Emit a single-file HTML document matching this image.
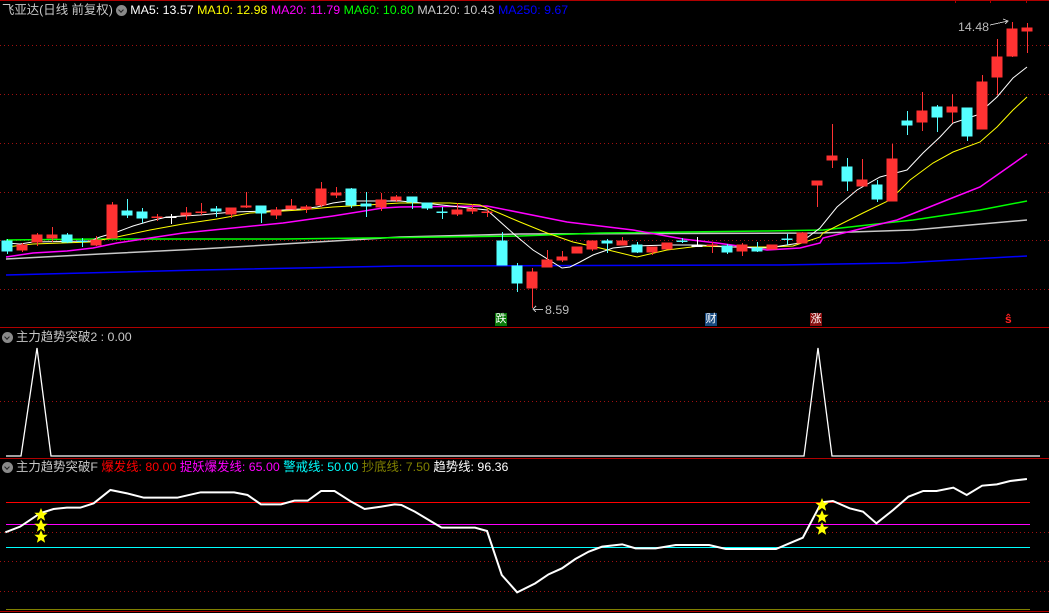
<!DOCTYPE html>
<html><head><meta charset="utf-8"><style>
html,body{margin:0;padding:0;background:#000;}
body{width:1049px;height:613px;overflow:hidden;position:relative;font-family:"Liberation Sans","Noto Sans CJK SC",sans-serif;}
.t{position:absolute;font-size:12.4px;white-space:nowrap;line-height:14px;}
.ic{display:inline-block;width:11px;height:11px;border-radius:50%;background:#8a8a8a;vertical-align:-2px;position:relative;margin-right:3px}
.ic:after{content:"";position:absolute;left:3px;top:3px;width:3px;height:3px;border-right:1.5px solid #222;border-bottom:1.5px solid #222;transform:rotate(45deg)}
</style></head><body>
<svg width="1049" height="613" style="position:absolute;left:0;top:0" shape-rendering="crispEdges">
<line x1="0" y1="0.5" x2="1049" y2="0.5" stroke="#b00000"/>
<line x1="0" y1="327.5" x2="1049" y2="327.5" stroke="#b00000"/>
<line x1="0" y1="458.5" x2="1049" y2="458.5" stroke="#b00000"/>
<line x1="0" y1="611.5" x2="1049" y2="611.5" stroke="#b00000"/>
<g stroke="#b00000"><line x1="955.5" y1="0" x2="955.5" y2="3"/><line x1="990.5" y1="0" x2="990.5" y2="3"/><line x1="1026.5" y1="0" x2="1026.5" y2="3"/></g>
<g stroke="#a01010" stroke-dasharray="1 3">
<line x1="0" y1="45.5" x2="1049" y2="45.5"/><line x1="0" y1="94.5" x2="1049" y2="94.5"/><line x1="0" y1="143.5" x2="1049" y2="143.5"/>
<line x1="0" y1="192.5" x2="1049" y2="192.5"/><line x1="0" y1="240.5" x2="1049" y2="240.5"/><line x1="0" y1="289.5" x2="1049" y2="289.5"/>
<line x1="0" y1="401.5" x2="1049" y2="401.5"/>
<line x1="0" y1="532.5" x2="1049" y2="532.5"/><line x1="0" y1="561.5" x2="1049" y2="561.5"/><line x1="0" y1="591.5" x2="1049" y2="591.5"/>
</g>
<g fill="none" stroke-width="1" shape-rendering="auto">
<polyline stroke="#0000ff" stroke-width="1.5" points="6,275 200,270 400,266 780,265 900,263 1027,256"/>
<polyline stroke="#c8c8c8" stroke-width="1.5" points="6,259 100,254 200,249 300,243 400,237 520,234 820,233 913,230 1027,220"/>
<polyline stroke="#00ff00" stroke-width="1.5" points="6,240 100,239 283,239 367,238 520,236 600,233 767,231 823,230 913,220 980,210 1027,201"/>
<polyline stroke="#ff00ff" stroke-width="1.5" points="6,257 33,253 67,251 93,248 117,243 150,238 183,233 233,228 283,223 333,216 383,208 400,207 487,206 567,222 633,230 683,239 717,243 767,250 800,248 820,243 823,238 897,220 947,200 980,187 1027,154"/>
<polyline stroke="#ffff00" points="6,247 33,244 90,242 117,237 150,230 183,224 217,219 250,213 300,210 333,207 367,205 400,203 450,203 480,205 520,222 547,233 573,242 600,248 637,257 667,250 700,246 733,247 767,247 793,246 820,237 823,233 863,213 890,200 910,180 933,163 953,152 980,142 997,127 1013,110 1027,97"/>
<polyline stroke="#ffffff" points="6,243 20,244 33,242 90,241 100,237 117,232 133,226 150,221 167,217 183,216 200,215 233,212 267,211 300,209 317,207 333,203 347,201 400,201 433,204 487,210 515,235 533,250 562,268 570,267 580,262 593,255 613,248 633,246 667,245 700,245 733,247 767,248 800,243 820,228 837,207 857,190 880,177 907,170 923,153 940,137 953,123 977,115 997,97 1013,78 1027,67"/>
</g>
<g fill="#ff3232" stroke="#ff3232">
<line x1="37.5" y1="233" x2="37.5" y2="246"/><rect x="32" y="235" width="10" height="7"/>
<line x1="22.5" y1="243" x2="22.5" y2="252"/><rect x="17" y="245" width="10" height="5"/>
<line x1="52.5" y1="227" x2="52.5" y2="242"/><rect x="47" y="235" width="10" height="3"/>
<line x1="96.5" y1="236" x2="96.5" y2="246"/><rect x="91" y="240" width="10" height="5"/>
<line x1="112.5" y1="202" x2="112.5" y2="238"/><rect x="107" y="205" width="10" height="33"/>
<line x1="157.5" y1="214" x2="157.5" y2="221"/><rect x="152" y="217" width="10" height="0.5"/>
<line x1="186.5" y1="207" x2="186.5" y2="220"/><rect x="181" y="213" width="10" height="2"/>
<line x1="201.5" y1="203" x2="201.5" y2="215"/><rect x="196" y="212" width="10" height="0.5"/>
<line x1="231.5" y1="208" x2="231.5" y2="218"/><rect x="226" y="208" width="10" height="6"/>
<line x1="246.5" y1="192" x2="246.5" y2="208"/><rect x="241" y="206" width="10" height="1"/>
<line x1="276.5" y1="207" x2="276.5" y2="219"/><rect x="271" y="210" width="10" height="5"/>
<line x1="291.5" y1="199" x2="291.5" y2="209"/><rect x="286" y="206" width="10" height="3"/>
<line x1="306.5" y1="205" x2="306.5" y2="213"/><rect x="301" y="207" width="10" height="2"/>
<line x1="321.5" y1="182" x2="321.5" y2="207"/><rect x="316" y="189" width="10" height="16"/>
<line x1="336.5" y1="187" x2="336.5" y2="198"/><rect x="331" y="193" width="10" height="2"/>
<line x1="381.5" y1="193" x2="381.5" y2="211"/><rect x="376" y="200" width="10" height="7"/>
<line x1="396.5" y1="195" x2="396.5" y2="202"/><rect x="391" y="197" width="10" height="3"/>
<line x1="457.5" y1="203" x2="457.5" y2="216"/><rect x="452" y="210" width="10" height="4"/>
<line x1="472.5" y1="204" x2="472.5" y2="214"/><rect x="467" y="209" width="10" height="2"/>
<line x1="487.5" y1="209" x2="487.5" y2="217"/><rect x="482" y="212" width="10" height="0.5"/>
<line x1="532.5" y1="268" x2="532.5" y2="308"/><rect x="527" y="272" width="10" height="16"/>
<line x1="547.5" y1="250" x2="547.5" y2="267"/><rect x="542" y="260" width="10" height="7"/>
<line x1="562.5" y1="251" x2="562.5" y2="262"/><rect x="557" y="257" width="10" height="3"/>
<rect x="572" y="247" width="10" height="6"/>
<line x1="592.5" y1="241" x2="592.5" y2="251"/><rect x="587" y="241" width="10" height="8"/>
<line x1="622.5" y1="237" x2="622.5" y2="245"/><rect x="617" y="241" width="10" height="4"/>
<line x1="652.5" y1="247" x2="652.5" y2="255"/><rect x="647" y="247" width="10" height="5"/>
<rect x="662" y="243" width="10" height="6"/>
<line x1="712.5" y1="242" x2="712.5" y2="253"/><rect x="707" y="245" width="10" height="0.5"/>
<line x1="742.5" y1="243" x2="742.5" y2="256"/><rect x="737" y="245" width="10" height="6"/>
<rect x="767" y="245" width="10" height="4"/>
<line x1="802.5" y1="232" x2="802.5" y2="243"/><rect x="797" y="233" width="10" height="10"/>
<line x1="817.5" y1="181" x2="817.5" y2="207"/><rect x="812" y="181" width="10" height="4"/>
<line x1="832.5" y1="124" x2="832.5" y2="168"/><rect x="827" y="156" width="10" height="4"/>
<line x1="862.5" y1="159" x2="862.5" y2="186"/><rect x="857" y="180" width="10" height="6"/>
<line x1="892.5" y1="144" x2="892.5" y2="201"/><rect x="887" y="159" width="10" height="42"/>
<line x1="922.5" y1="92" x2="922.5" y2="131"/><rect x="917" y="111" width="10" height="11"/>
<line x1="952.5" y1="94" x2="952.5" y2="123"/><rect x="947" y="107" width="10" height="5"/>
<line x1="982.5" y1="75" x2="982.5" y2="129"/><rect x="977" y="82" width="10" height="47"/>
<line x1="997.5" y1="39" x2="997.5" y2="95"/><rect x="992" y="57" width="10" height="20"/>
<line x1="1012.5" y1="22" x2="1012.5" y2="57"/><rect x="1007" y="29" width="10" height="27"/>
<line x1="1027.5" y1="23" x2="1027.5" y2="53"/><rect x="1022" y="28" width="10" height="3"/>
</g>
<g fill="#54ffff" stroke="#54ffff">
<line x1="7.5" y1="239" x2="7.5" y2="254"/><rect x="2" y="241" width="10" height="10"/>
<line x1="67.5" y1="233" x2="67.5" y2="243"/><rect x="62" y="235" width="10" height="7"/>
<line x1="82.5" y1="238" x2="82.5" y2="247"/><rect x="77" y="241" width="10" height="0.5"/>
<line x1="127.5" y1="199" x2="127.5" y2="218"/><rect x="122" y="211" width="10" height="4"/>
<line x1="142.5" y1="208" x2="142.5" y2="223"/><rect x="137" y="212" width="10" height="6"/>
<line x1="216.5" y1="206" x2="216.5" y2="217"/><rect x="211" y="209" width="10" height="2"/>
<line x1="261.5" y1="206" x2="261.5" y2="223"/><rect x="256" y="206" width="10" height="7"/>
<line x1="351.5" y1="188" x2="351.5" y2="208"/><rect x="346" y="189" width="10" height="16"/>
<line x1="366.5" y1="192" x2="366.5" y2="217"/><rect x="361" y="204" width="10" height="2"/>
<line x1="412.5" y1="197" x2="412.5" y2="209"/><rect x="407" y="197" width="10" height="5"/>
<line x1="427.5" y1="203" x2="427.5" y2="210"/><rect x="422" y="203" width="10" height="5"/>
<line x1="442.5" y1="207" x2="442.5" y2="219"/><rect x="437" y="212" width="10" height="0.5"/>
<line x1="502.5" y1="232" x2="502.5" y2="265"/><rect x="497" y="241" width="10" height="24"/>
<line x1="517.5" y1="263" x2="517.5" y2="292"/><rect x="512" y="266" width="10" height="17"/>
<line x1="607.5" y1="239" x2="607.5" y2="253"/><rect x="602" y="241" width="10" height="2"/>
<line x1="637.5" y1="242" x2="637.5" y2="253"/><rect x="632" y="245" width="10" height="7"/>
<line x1="682.5" y1="238" x2="682.5" y2="243"/><rect x="677" y="241" width="10" height="0.5"/>
<line x1="727.5" y1="244" x2="727.5" y2="254"/><rect x="722" y="246" width="10" height="6"/>
<line x1="757.5" y1="242" x2="757.5" y2="252"/><rect x="752" y="248" width="10" height="3"/>
<line x1="787.5" y1="234" x2="787.5" y2="245"/><rect x="782" y="239" width="10" height="0.5"/>
<line x1="847.5" y1="158" x2="847.5" y2="191"/><rect x="842" y="167" width="10" height="14"/>
<line x1="877.5" y1="180" x2="877.5" y2="202"/><rect x="872" y="185" width="10" height="14"/>
<line x1="907.5" y1="111" x2="907.5" y2="135"/><rect x="902" y="121" width="10" height="4"/>
<line x1="937.5" y1="105" x2="937.5" y2="132"/><rect x="932" y="107" width="10" height="10"/>
<line x1="967.5" y1="108" x2="967.5" y2="141"/><rect x="962" y="108" width="10" height="28"/>
</g>
<g stroke="#fff" fill="#fff">
<line x1="171.5" y1="214" x2="171.5" y2="224"/><rect x="166" y="217" width="10" height="0.5"/>
<line x1="697.5" y1="237" x2="697.5" y2="247"/><rect x="692" y="246" width="10" height="0.5"/>
</g>
<g stroke="#bbb" fill="none"><line x1="533" y1="309.5" x2="543" y2="309.5"/><polyline points="536,306 533,309 536,312"/>
<polyline points="990,25 1008,21"/><polyline points="1003,19 1008,21 1005,24"/></g>
<rect x="495" y="313" width="12" height="13" fill="#0a7a0a"/>
<rect x="705" y="313" width="12" height="13" fill="#174a80"/>
<rect x="810" y="313" width="12" height="13" fill="#8a1010"/>
<polyline shape-rendering="auto" fill="none" stroke="#fff" stroke-width="1.3" points="6,456 21,456 37,348 51,456 804,456 818,348 832,456 1040,456"/>
<line x1="6" y1="502.5" x2="1030" y2="502.5" stroke="#ff0000"/>
<line x1="6" y1="524.5" x2="1030" y2="524.5" stroke="#ff00ff"/>
<line x1="6" y1="547.5" x2="1030" y2="547.5" stroke="#00ffff"/>
<line x1="6" y1="609.5" x2="1030" y2="609.5" stroke="#808000"/>
</svg>
<svg width="1049" height="138" viewBox="0 0 1568 414" preserveAspectRatio="none" style="position:absolute;left:0;top:475px">
<polyline fill="none" stroke="#fff" stroke-width="2" vector-effect="non-scaling-stroke" points="8,172 30,155 60,115 80,102 100,98 120,98 140,85 165,45 190,55 215,68 265,68 300,52 350,52 370,60 390,88 420,88 440,77 460,77 480,48 500,48 525,80 545,102 570,95 590,88 600,90 620,110 660,158 710,158 728,168 750,300 773,352 800,325 820,298 840,280 860,252 880,230 900,215 930,208 950,220 980,220 1010,210 1060,210 1085,222 1160,222 1180,205 1200,188 1228,82 1245,78 1270,100 1290,110 1310,145 1335,105 1358,65 1380,48 1400,48 1425,38 1445,60 1468,32 1490,28 1510,18 1535,12"/>
</svg>
<svg width="1049" height="613" style="position:absolute;left:0;top:0">
<g fill="#ffff00">
<path d="M0,-7 L1.9,-2.3 L6.7,-2.2 L2.9,0.9 L4.1,5.8 L0,3 L-4.1,5.8 L-2.9,0.9 L-6.7,-2.2 L-1.9,-2.3Z" transform="translate(41,515)"/>
<path d="M0,-7 L1.9,-2.3 L6.7,-2.2 L2.9,0.9 L4.1,5.8 L0,3 L-4.1,5.8 L-2.9,0.9 L-6.7,-2.2 L-1.9,-2.3Z" transform="translate(41,526)"/>
<path d="M0,-7 L1.9,-2.3 L6.7,-2.2 L2.9,0.9 L4.1,5.8 L0,3 L-4.1,5.8 L-2.9,0.9 L-6.7,-2.2 L-1.9,-2.3Z" transform="translate(41,537)"/>
<path d="M0,-7 L1.9,-2.3 L6.7,-2.2 L2.9,0.9 L4.1,5.8 L0,3 L-4.1,5.8 L-2.9,0.9 L-6.7,-2.2 L-1.9,-2.3Z" transform="translate(822,505)"/>
<path d="M0,-7 L1.9,-2.3 L6.7,-2.2 L2.9,0.9 L4.1,5.8 L0,3 L-4.1,5.8 L-2.9,0.9 L-6.7,-2.2 L-1.9,-2.3Z" transform="translate(822,517)"/>
<path d="M0,-7 L1.9,-2.3 L6.7,-2.2 L2.9,0.9 L4.1,5.8 L0,3 L-4.1,5.8 L-2.9,0.9 L-6.7,-2.2 L-1.9,-2.3Z" transform="translate(822,529)"/>
</g>
</svg>
<div class="t" style="left:2px;top:3px;color:#c8c8c8">飞亚达(日线 前复权) <span class="ic"></span><span style="color:#fff">MA5: 13.57</span> <span style="color:#ffff00">MA10: 12.98</span> <span style="color:#ff00ff">MA20: 11.79</span> <span style="color:#00ff00">MA60: 10.80</span> <span style="color:#c8c8c8">MA120: 10.43</span> <span style="color:#0000ff">MA250: 9.67</span></div>
<div class="t" style="left:958px;top:20px;color:#bbb">14.48</div>
<div class="t" style="left:545px;top:303px;color:#bbb">8.59</div>
<div class="t" style="left:495px;top:312px;width:12px;text-align:center;color:#fff;font-size:11px">跌</div>
<div class="t" style="left:705px;top:312px;width:12px;text-align:center;color:#fff;font-size:11px">财</div>
<div class="t" style="left:810px;top:312px;width:12px;text-align:center;color:#fff;font-size:11px">涨</div>
<div class="t" style="left:1005px;top:312px;color:#ff2020;font-weight:bold;font-size:12px">ŝ</div>
<div class="t" style="left:2px;top:330px;color:#c8c8c8"><span class="ic"></span>主力趋势突破2 : 0.00</div>
<div class="t" style="left:2px;top:460px;color:#c8c8c8"><span class="ic"></span>主力趋势突破F <span style="color:#ff0000">爆发线: 80.00</span> <span style="color:#ff00ff">捉妖爆发线: 65.00</span> <span style="color:#00ffff">警戒线: 50.00</span> <span style="color:#808000">抄底线: 7.50</span> <span style="color:#fff">趋势线: 96.36</span></div>
</body></html>
